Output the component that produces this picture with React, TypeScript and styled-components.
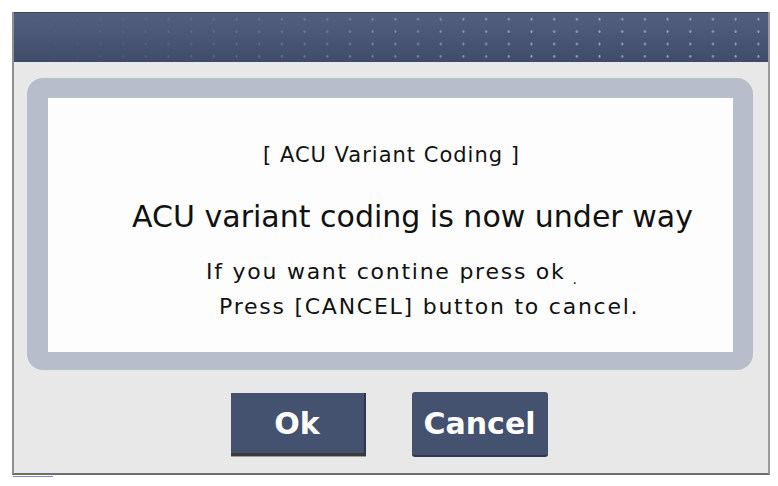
import styled, { createGlobalStyle } from "styled-components";

const GlobalStyle = createGlobalStyle`
  html, body {
    margin: 0;
    padding: 0;
    background: #ffffff;
  }
  body {
    font-family: "DejaVu Sans", "Liberation Sans", sans-serif;
  }
`;

export default function App() {
  return (
    <>
      <GlobalStyle />
      <Page>
        <Window>
          <Header />
          <Body>
            <Frame>
              <Title>[ ACU Variant Coding ]</Title>
              <Headline>ACU variant coding is now under way</Headline>
              <NoteBlock>
                <Note>
                  If you want contine press ok<StrayDot>.</StrayDot>
                </Note>
                <Note $indent={171}>Press [CANCEL] button to cancel.</Note>
              </NoteBlock>
            </Frame>
            <ButtonRow>
              <DialogButton $pressed>Ok</DialogButton>
              <DialogButton>Cancel</DialogButton>
            </ButtonRow>
          </Body>
        </Window>
        <FocusLine />
      </Page>
    </>
  );
}

const Page = styled.div`
  padding: 12px 0 0 12px;
`;

const Window = styled.div`
  box-sizing: border-box;
  width: 758px;
  height: 463px;
  display: flex;
  flex-direction: column;
  border-left: 2px solid #8e8e8e;
  border-right: 2px solid #9a9a9a;
  border-bottom: 2px solid #6e6e6e;
`;

const Header = styled.div`
  position: relative;
  height: 50px;
  flex-shrink: 0;
  overflow: hidden;
  background: linear-gradient(to bottom, #525f7d 0%, #4a5776 45%, #3e4b69 100%);
  border-top: 1px solid #38435c;
  box-sizing: border-box;

  &::after {
    content: "";
    position: absolute;
    inset: 0;
    background-image: radial-gradient(
      ellipse 1.3px 1.8px at center,
      rgba(160, 172, 200, 0.9) 0 60%,
      transparent 100%
    );
    background-size: 22.7px 12.4px;
    background-position: 7px 0px;
    -webkit-mask-image: linear-gradient(to right, transparent 0%, rgba(0, 0, 0, 0.3) 30%, #000 70%);
    mask-image: linear-gradient(to right, transparent 0%, rgba(0, 0, 0, 0.3) 30%, #000 70%);
  }
`;

const Body = styled.div`
  flex: 1;
  background: #e8e8e8;
  padding: 16px 15px 0 13px;
  display: flex;
  flex-direction: column;
`;

const Frame = styled.div`
  box-sizing: border-box;
  height: 292px;
  border-style: solid;
  border-color: #b8bdcc;
  border-width: 20px 20px 18px 21px;
  border-radius: 16px;
  background: #fdfdfd;
  padding-top: 47px;
  display: flex;
  flex-direction: column;
  color: #111111;
`;

const Title = styled.div`
  font-size: 21px;
  line-height: 21px;
  letter-spacing: 1px;
  text-align: center;
  padding-left: 2px;
`;

const Headline = styled.div`
  margin-top: 36px;
  font-size: 30px;
  line-height: 30px;
  text-align: center;
  padding-left: 44px;
`;

const NoteBlock = styled.div`
  margin-top: 26px;
  display: flex;
  flex-direction: column;
`;

const Note = styled.div<{ $indent?: number }>`
  font-size: 22px;
  line-height: 27px;
  letter-spacing: 1.75px;
  padding-left: ${(p) => p.$indent ?? 158}px;
  white-space: nowrap;
`;

const StrayDot = styled.span`
  display: inline-block;
  margin-left: 7px;
  vertical-align: -5px;
  font-size: 14px;
`;

const ButtonRow = styled.div`
  margin-top: 22px;
  display: flex;
  justify-content: center;
  align-items: flex-start;
  gap: 46px;
  padding-right: 2px;
`;

const DialogButton = styled.button<{ $pressed?: boolean }>`
  box-sizing: border-box;
  width: ${(p) => (p.$pressed ? 135 : 136)}px;
  height: ${(p) => (p.$pressed ? 63 : 65)}px;
  margin-top: ${(p) => (p.$pressed ? 1 : 0)}px;
  background: #44516f;
  color: #ffffff;
  font-family: "DejaVu Sans", "Liberation Sans", sans-serif;
  font-weight: bold;
  font-size: 30px;
  padding: 0;
  cursor: pointer;
  border: none;
  border-radius: ${(p) => (p.$pressed ? 0 : 3)}px;
  border-right: ${(p) => (p.$pressed ? "2px solid #2f374a" : "none")};
  border-bottom: ${(p) => (p.$pressed ? "3px solid #3a3a3a" : "2px solid #2e3850")};
  box-shadow: ${(p) => (p.$pressed ? "0 1px 0 #9a9a9a" : "none")};
`;

const FocusLine = styled.div`
  width: 40px;
  height: 1px;
  margin: 1px 0 0 1px;
  background: #8088c8;
`;
